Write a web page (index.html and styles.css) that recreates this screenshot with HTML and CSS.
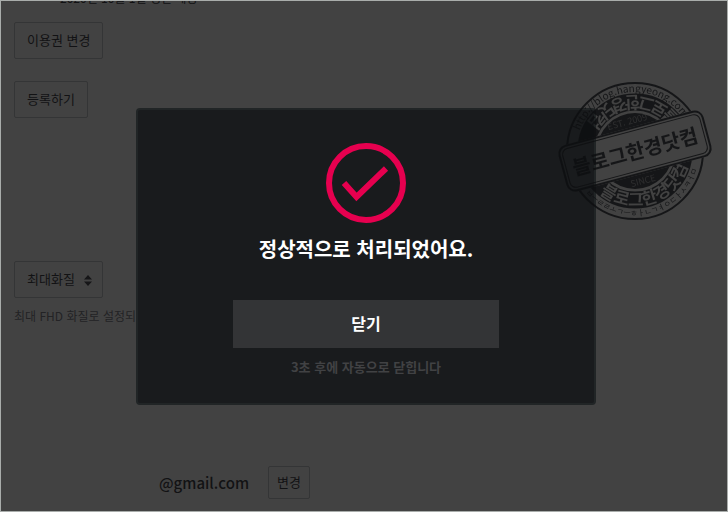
FILE: index.html
```html
<!DOCTYPE html>
<html lang="ko">
<head>
    <meta charset="UTF-8" />
    <meta name="viewport" content="width=device-width, initial-scale=1" />
    <title>설정</title>
    <link rel="stylesheet" href="styles.css">
</head>
<body>
    <main class="settings">
        <p class="renewal">2020년 10월 1일 갱신 예정</p>
        <section class="row">
            <button type="button" class="btn">이용권 변경</button>
        </section>
        <section class="row row-coupon">
            <button type="button" class="btn">등록하기</button>
        </section>
        <section class="row row-quality">
            <div class="select-wrap">
                <select class="btn quality" id="quality" aria-label="화질">
                    <option>최대화질</option>
                </select>
                <svg class="arrows" viewBox="0 0 8 11" aria-hidden="true">
                    <path d="M4 0 8 4.5H0zM4 11 0 6.5h8z" />
                </svg>
            </div>
            <label class="hint" for="quality">최대 FHD 화질로 설정되</label>
        </section>
        <section class="row-email">
            <strong class="email">@gmail.com</strong>
            <button type="button" class="btn btn-small">변경</button>
        </section>
    </main>

    <div class="overlay">
        <div class="modal" role="dialog" aria-labelledby="modalTitle">
            <svg class="check" viewBox="0 0 80 80" aria-hidden="true">
                <circle cx="40" cy="40" r="37" />
                <path d="M18 40 30.500 54 60 25.500" />
            </svg>
            <h2 id="modalTitle">정상적으로 처리되었어요.</h2>
            <button type="button" class="close">닫기</button>
            <p class="countdown">3초 후에 자동으로 닫힙니다</p>
        </div>
    </div>

    <svg class="stamp" viewBox="-78 -72 156 144" aria-hidden="true">
        <defs>
            <path id="topOuter" d="M-59 0A59 59 0 0 1 59 0" />
            <path id="bottomOuter" d="M-65 0A65 65 0 0 0 65 0" />
            <path id="topRing" d="M55 0A55 55 0 0 0-55 0" />
            <path id="bottomRing" d="M-55 0A55 55 0 0 0 55 0" />
            <mask id="cut" maskUnits="userSpaceOnUse" x="-78" y="-72" width="156" height="144">
                <rect x="-78" y="-72" width="156" height="144" fill="#fff" />
                <g class="ring-text" transform="rotate(-13)">
                    <text transform="rotate(10)"><textPath href="#topRing" startOffset="50%">블로그한경닷컴</textPath></text>
                    <text transform="rotate(-4)"><textPath href="#bottomRing" startOffset="50%">블로그한경닷컴</textPath></text>
                </g>
                <g class="core-text" transform="rotate(-15)">
                    <text y="-27">EST. 2009</text>
                    <text y="34">SINCE</text>
                </g>
                <rect x="-75" y="-24" width="150" height="48" rx="8" fill="#000" transform="rotate(-15)" />
            </mask>
            <mask id="outside" maskUnits="userSpaceOnUse" x="-78" y="-72" width="156" height="144">
                <rect x="-78" y="-72" width="156" height="144" fill="#fff" />
                <rect x="-75" y="-24" width="150" height="48" rx="8" fill="#000" transform="rotate(-15)" />
            </mask>
        </defs>
        <g mask="url(#cut)">
            <circle r="49" class="band" />
            <circle r="38" class="core" />
        </g>
        <g mask="url(#outside)">
            <circle r="68" class="line thick" />
            <g class="edge-text">
                <text transform="rotate(-7)"><textPath href="#topOuter" startOffset="50%">http://blog.hangyeong.com</textPath></text>
                <text class="letters" transform="rotate(-12)"><textPath href="#bottomOuter" startOffset="50%">ㅂㅡㄹㄹㅗㄱㅡㅎㅏㄴㄱㅕㅇㄷㅏㅅㅋㅓㅁ</textPath></text>
            </g>
        </g>
        <g transform="rotate(-15)">
            <rect x="-74" y="-23" width="148" height="46" rx="8" class="line thick" />
            <rect x="-71" y="-20" width="142" height="40" rx="6" class="line" />
            <text class="name" y="8">블로그한경닷컴</text>
        </g>
    </svg>
</body>
</html>
```
FILE: styles.css
```css
* {
    box-sizing: border-box;
}
body {
    margin: 0;
    min-height: 100vh;
    overflow: hidden;
    border: 1px solid #a9adab;
    background-color: #424242;
    color: #121214;
    font-family: "Noto Sans CJK KR", sans-serif;
    font-size: 13px;
    line-height: 20px;
}
p, h2 {
    margin: 0;
}
button, select {
    font-family: inherit;
}

/* 설정 화면 */
.settings {
    padding: 0 13px;
}
.renewal {
    margin-top: -13px;
    margin-bottom: 14px;
    padding-left: 46px;
    font-size: 12px;
}
.row {
    display: flex;
    flex-direction: column;
    align-items: flex-start;
}
.row-coupon {
    margin-top: 22px;
}
.row-quality {
    margin-top: 143px;
    gap: 8px;
}
.btn {
    height: 37px;
    padding: 0 12px 1px;
    border: 1px solid #343536;
    border-radius: 2px;
    background-color: transparent;
    color: #121214;
    font-size: 13px;
    line-height: 20px;
}
.btn-small {
    height: 33px;
    padding: 0 8px 1px;
}
.select-wrap {
    position: relative;
}
.quality {
    appearance: none;
    padding-right: 27px;
}
.arrows {
    position: absolute;
    top: 14px;
    right: 11px;
    width: 8px;
    height: 11px;
    fill: #161618;
    pointer-events: none;
}
.hint {
    color: #232325;
    font-size: 12px;
}
.row-email {
    display: flex;
    align-items: center;
    gap: 19px;
    margin-top: 140px;
    padding-left: 145px;
}
.email {
    font-size: 15px;
    font-weight: 500;
}

/* 완료 팝업 */
.overlay {
    position: fixed;
    inset: 0;
    display: flex;
    align-items: center;
    justify-content: center;
    padding-left: 4px;
}
.modal {
    display: flex;
    flex-direction: column;
    align-items: center;
    width: 64%;
    max-width: 460px;
    padding: 33px 20px 26px;
    border: 2px solid #212526;
    border-radius: 4px;
    background-color: #191b1d;
    text-align: center;
}
.check {
    width: 80px;
    height: 80px;
    fill: none;
    stroke: #e6004f;
    stroke-width: 6;
}
.modal h2 {
    margin-top: 11px;
    color: #fff;
    font-size: 20px;
    font-weight: 700;
    line-height: 30px;
}
.close {
    width: 64%;
    max-width: 266px;
    height: 48px;
    margin-top: 36px;
    padding: 0 0 2px;
    border: 0;
    background-color: #333436;
    color: #fff;
    font-size: 16px;
    font-weight: 700;
}
.countdown {
    margin-top: 9px;
    color: #414244;
    font-size: 13px;
    font-weight: 700;
}

/* 도장 */
.stamp {
    position: absolute;
    top: 79px;
    right: 15px;
    width: 156px;
    height: 144px;
    color: #0e0f11;
    opacity: 0.85;
    text-anchor: middle;
}
.line {
    fill: none;
    stroke: currentColor;
    stroke-width: 1;
}
.thick {
    stroke-width: 2;
}
.band {
    fill: none;
    stroke: currentColor;
    stroke-width: 17;
}
.core {
    fill: currentColor;
}
.ring-text {
    font-size: 17px;
    font-weight: 700;
}
.core-text {
    font-size: 9px;
    fill: #777;
}
.edge-text {
    fill: currentColor;
    font-size: 10px;
}
.letters {
    font-size: 8px;
}
.name {
    fill: currentColor;
    font-size: 20px;
    font-weight: 700;
}
```
